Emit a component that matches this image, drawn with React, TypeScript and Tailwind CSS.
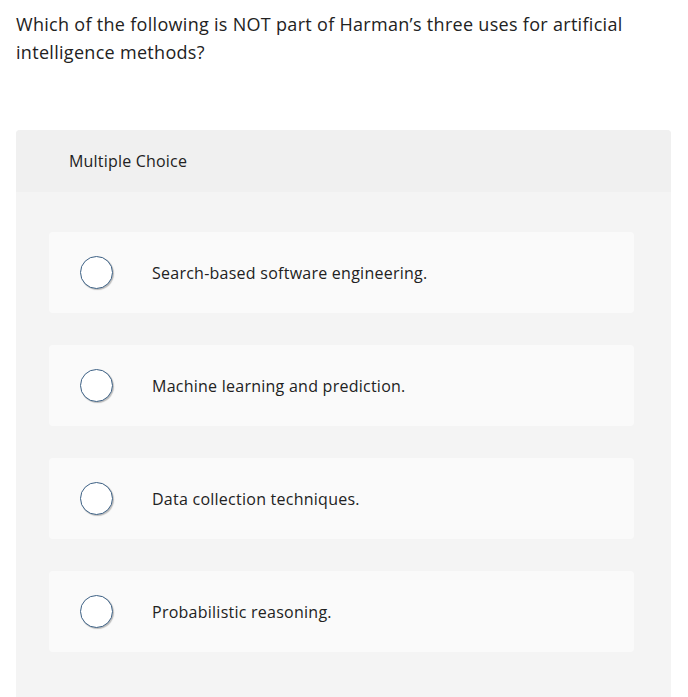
const choices = [
  'Search-based software engineering.',
  'Machine learning and prediction.',
  'Data collection techniques.',
  'Probabilistic reasoning.',
];

const App = () => {
  return (
    <div className="min-h-[697px] bg-white px-4 pt-[10px] text-[#222] font-['Open_Sans',sans-serif]">
      <p className="text-[18px] leading-[28px] tracking-[0.3px] pr-8">
        Which of the following is NOT part of Harman’s three uses for artificial intelligence methods?
      </p>
      <div className="mt-[64px] w-[655px] rounded-t bg-[#f4f4f4] min-h-[567px]">
        <div className="h-[62px] rounded-t bg-[#f0f0f0] pl-[53px] flex items-center text-[16px] tracking-[0.2px]">Multiple Choice</div>
        <div className="flex flex-col gap-[32px] pl-[33px] pr-[37px] pt-[40px] pb-[44px]">
          {choices.map((c) => (
            <div key={c} className="h-[81px] rounded bg-[#fafafa] flex items-center pl-[31px]">
              <span className="w-[33px] h-[33px] rounded-full border-[1.5px] border-[#3d6185] bg-white shadow-[1px_1px_1px_rgba(0,0,0,0.25)] shrink-0" />
              <span className="ml-[39px] text-[16px] tracking-[0.25px]">{c}</span>
            </div>
          ))}
        </div>
      </div>
    </div>
  );
};

export default App;
